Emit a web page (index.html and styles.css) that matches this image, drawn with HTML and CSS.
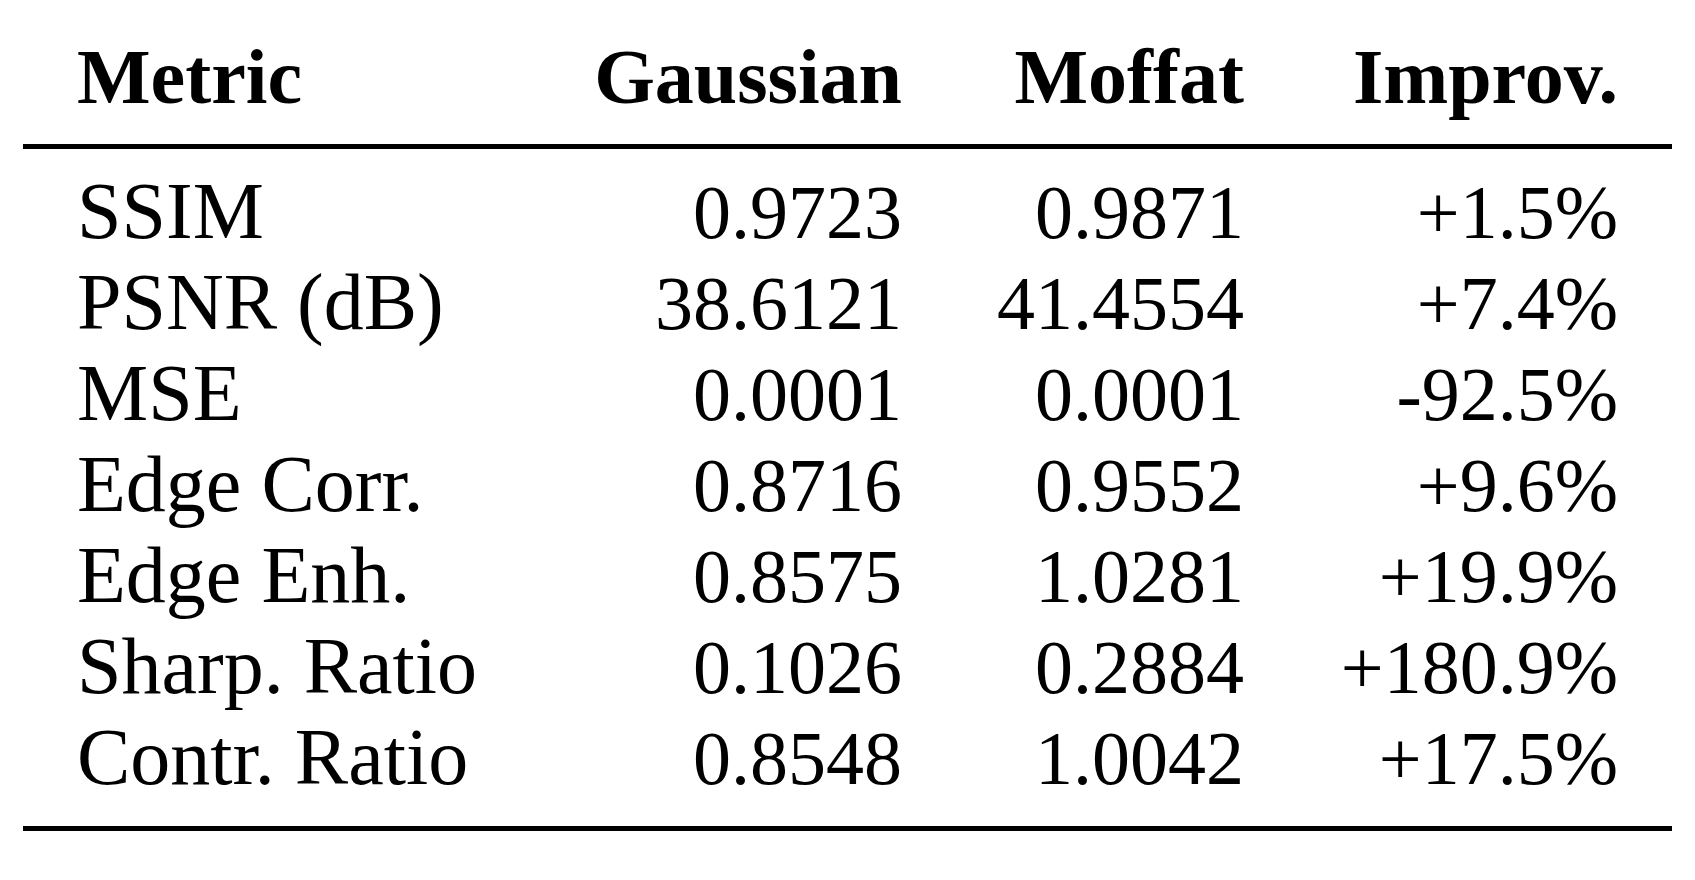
FILE: index.html
```html
<!DOCTYPE html>
<html lang="en">
<head>
  <meta charset="UTF-8">
  <meta name="viewport" content="width=device-width, initial-scale=1.0">
  <title>Gaussian vs Moffat metrics</title>
  <link rel="stylesheet" href="styles.css">
</head>
<body>

  <table class="results">
    <colgroup>
      <col class="col-metric">
      <col class="col-gauss">
      <col class="col-moffat">
      <col class="col-improv">
    </colgroup>
    <thead>
      <tr>
        <th class="label">Metric</th>
        <th>Gaussian</th>
        <th>Moffat</th>
        <th>Improv.</th>
      </tr>
    </thead>
    <tbody>
      <tr>
        <td class="label">SSIM</td>
        <td>0.9723</td>
        <td>0.9871</td>
        <td>+1.5%</td>
      </tr>
      <tr>
        <td class="label">PSNR (dB)</td>
        <td>38.6121</td>
        <td>41.4554</td>
        <td>+7.4%</td>
      </tr>
      <tr>
        <td class="label">MSE</td>
        <td>0.0001</td>
        <td>0.0001</td>
        <td>-92.5%</td>
      </tr>
      <tr>
        <td class="label">Edge Corr.</td>
        <td>0.8716</td>
        <td>0.9552</td>
        <td>+9.6%</td>
      </tr>
      <tr>
        <td class="label">Edge Enh.</td>
        <td>0.8575</td>
        <td>1.0281</td>
        <td>+19.9%</td>
      </tr>
      <tr>
        <td class="label">Sharp. Ratio</td>
        <td>0.1026</td>
        <td>0.2884</td>
        <td>+180.9%</td>
      </tr>
      <tr>
        <td class="label">Contr. Ratio</td>
        <td>0.8548</td>
        <td>1.0042</td>
        <td>+17.5%</td>
      </tr>
    </tbody>
  </table>

</body>
</html>
```

FILE: styles.css
```css
body {
  margin: 0;
  padding: 0;
  background-color: #fff;
  color: #000;
  font-family: "Liberation Serif", "Times New Roman", serif;
}
.results {
  margin: 32px 0 0 23px;
  width: 1649px;
  table-layout: fixed;
  border-collapse: collapse;
  border-spacing: 0;
}
.col-metric {
  width: 512px;
}
.col-gauss {
  width: 421px;
}
.col-moffat {
  width: 342px;
}
.col-improv {
  width: 374px;
}
.results th,
.results td {
  padding: 0 54px 0 0;
  text-align: right;
  vertical-align: baseline;
  line-height: 90px;
  white-space: nowrap;
}
.results th {
  font-size: 78px;
  font-weight: bold;
  padding-bottom: 22px;
  border-bottom: 5px solid #000;
}
.results td {
  font-size: 76px;
  font-weight: normal;
}
.results .label {
  text-align: left;
  padding: 0 0 0 54px;
}
.results th.label {
  padding-bottom: 22px;
}
.results td.label {
  font-size: 80px;
}
.results tbody tr:first-child td {
  padding-top: 17px;
}
.results tbody tr:last-child td {
  padding-bottom: 23px;
  border-bottom: 5px solid #000;
}
```
